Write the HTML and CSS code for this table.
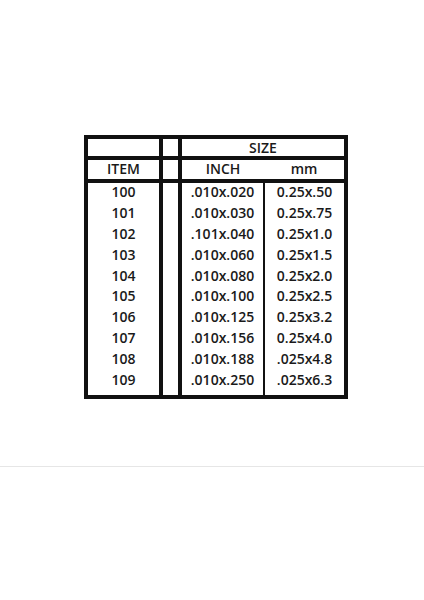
FILE: index.html
```html
<!DOCTYPE html>
<html>
<head>
<meta charset="utf-8">
<link rel="stylesheet" href="styles.css">
</head>
<body>
<div class="page">
  <div class="sheet">
    <table class="sizes">
      <colgroup>
        <col class="c-item">
        <col class="c-gap">
        <col class="c-inch">
        <col class="c-mm">
      </colgroup>
      <tr class="r-top">
        <td></td><td></td><td colspan="2">SIZE</td>
      </tr>
      <tr class="r-head">
        <td>ITEM</td><td></td><td class="no-div">INCH</td><td class="no-div">mm</td>
      </tr>
      <tr class="r-data first"><td>100</td><td></td><td>.010x.020</td><td class="div">0.25x.50</td></tr>
      <tr class="r-data"><td>101</td><td></td><td>.010x.030</td><td class="div">0.25x.75</td></tr>
      <tr class="r-data"><td>102</td><td></td><td>.101x.040</td><td class="div">0.25x1.0</td></tr>
      <tr class="r-data"><td>103</td><td></td><td>.010x.060</td><td class="div">0.25x1.5</td></tr>
      <tr class="r-data"><td>104</td><td></td><td>.010x.080</td><td class="div">0.25x2.0</td></tr>
      <tr class="r-data"><td>105</td><td></td><td>.010x.100</td><td class="div">0.25x2.5</td></tr>
      <tr class="r-data"><td>106</td><td></td><td>.010x.125</td><td class="div">0.25x3.2</td></tr>
      <tr class="r-data"><td>107</td><td></td><td>.010x.156</td><td class="div">0.25x4.0</td></tr>
      <tr class="r-data"><td>108</td><td></td><td>.010x.188</td><td class="div">.025x4.8</td></tr>
      <tr class="r-data last"><td>109</td><td></td><td>.010x.250</td><td class="div">.025x6.3</td></tr>
    </table>
  </div>
  <div class="rule"></div>
</div>
</body>
</html>
```

FILE: styles.css
```css
html, body {
  margin: 0;
  padding: 0;
  background: #ffffff;
}

.page {
  width: 424px;
  height: 600px;
  background: #ffffff;
}

.sheet {
  padding: 135px 0 0 84px;
  height: 466px;
  box-sizing: border-box;
}

.sizes {
  border-collapse: collapse;
  table-layout: fixed;
  border: 4px solid #111111;
  font-family: "Open Sans", "Liberation Sans", sans-serif;
  font-weight: 600;
  font-size: 14px;
  color: #1a1a1a;
}

.c-item { width: 75px; }
.c-gap { width: 19px; }
.c-inch { width: 84px; }
.c-mm { width: 82px; }

.sizes td {
  padding: 0;
  text-align: center;
  line-height: 1;
  white-space: nowrap;
}

.sizes td:nth-child(1),
.sizes td:nth-child(2) {
  border-right: 4px solid #111111;
}

.r-top td {
  height: 17px;
  border-bottom: 4px solid #111111;
}

.r-head td {
  height: 18.5px;
  border-bottom: 4px solid #111111;
}

.r-data td {
  height: 18.9px;
  padding-bottom: 2px;
}

.r-data.last td {
  height: 19px;
  padding-bottom: 5px;
}

.r-data td.div {
  border-left: 2px solid #111111;
}

.rule {
  height: 1px;
  background: #e6e6e6;
}
```
